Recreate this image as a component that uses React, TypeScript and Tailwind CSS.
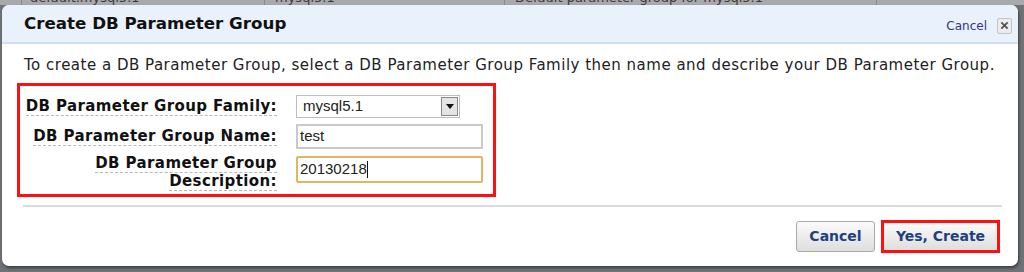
import React from "react";

export default function App() {
  const verdana = { fontFamily: '"DejaVu Sans", Verdana, sans-serif' } as React.CSSProperties;
  const arial = { fontFamily: '"Liberation Sans", Arial, sans-serif' } as React.CSSProperties;
  return (
    <div className="w-[1024px] h-[272px] overflow-hidden bg-[#6f7276] flex flex-col" style={verdana}>
      {/* background table row peeking above the dialog */}
      <div className="h-[5px] shrink-0 overflow-hidden bg-[#a7a9ac] flex text-[13px] text-[#3a3a3a] leading-[13px]">
        <div className="w-[22px] border-r border-[#8a8a8a]" />
        <div className="w-[243px] pl-[8px] -mt-[9px] border-r border-[#8a8a8a]">default.mysql5.1</div>
        <div className="w-[240px] pl-[10px] -mt-[9px] border-r border-[#8a8a8a]">mysql5.1</div>
        <div className="w-[372px] pl-[10px] -mt-[9px] border-r border-[#8a8a8a]">Default parameter group for mysql5.1</div>
        <div className="flex-1" />
      </div>
      <div className="flex-1 flex px-[2px] pr-[6px] pb-[6px]">
        <div className="flex-1 bg-white rounded-[7px] overflow-hidden flex flex-col shadow-[1px_2px_3px_rgba(0,0,0,0.45)]">
          {/* header */}
          <div className="h-[39px] shrink-0 bg-[#e9f2fc] border-b-2 border-[#cfe0f3] flex items-center justify-between pl-[22px] pr-[6px]">
            <div className="text-[16.7px] font-bold text-[#111] mt-[1px]">Create DB Parameter Group</div>
            <div className="flex items-center gap-[10px] mt-[4px]">
              <span className="text-[12px] text-[#33338f]">Cancel</span>
              <span className="w-[15px] h-[16px] border border-[#c4c4c4] bg-[#ececec] flex items-center justify-center rounded-[2px]">
                <svg width="9" height="9" viewBox="0 0 10 10">
                  <path d="M1.5 1.5 L8.5 8.5 M8.5 1.5 L1.5 8.5" stroke="#555" strokeWidth="2" />
                </svg>
              </span>
            </div>
          </div>
          {/* body */}
          <div className="pl-[22px] pr-[16px] pt-[12px] flex flex-col">
            <p className="text-[15px] tracking-[0.5px] text-[#222] leading-[18px]">
              To create a DB Parameter Group, select a DB Parameter Group Family then name and describe your DB Parameter Group.
            </p>
            <div className="mt-[9px] -ml-[7px] w-[479px] border-[3px] border-[#ff1010] pt-[9px] pb-[4px] flex flex-col">
              <div className="flex items-center">
                <div className="w-[257px] text-right text-[15px] tracking-[0.4px] font-bold text-[#111]">
                  <span className="border-b border-dashed border-[#b8b8b8]">DB Parameter Group Family:</span>
                </div>
                <div className="ml-[19px] w-[164px] h-[23px] border border-[#bdbdbd] flex items-center justify-between pl-[6px] pr-[1px]" style={arial}>
                  <span className="text-[15px] text-[#222]">mysql5.1</span>
                  <span className="w-[17px] h-[19px] border border-[#888] bg-[#e4e4e4] flex items-center justify-center">
                    <svg width="8" height="5" viewBox="0 0 8 5"><path d="M0 0 L8 0 L4 5 Z" fill="#111" /></svg>
                  </span>
                </div>
              </div>
              <div className="flex items-center mt-[6px]">
                <div className="w-[257px] text-right text-[15px] tracking-[0.4px] font-bold text-[#111]">
                  <span className="border-b border-dashed border-[#b8b8b8]">DB Parameter Group Name:</span>
                </div>
                <div className="ml-[19px] w-[187px] h-[25px] border-2 border-[#c9c9c9] flex items-center pl-[2px]" style={arial}>
                  <span className="text-[15px] text-[#222]">test</span>
                </div>
              </div>
              <div className="flex items-start mt-[7px]">
                <div className="w-[257px] -mt-[2px] text-right text-[15px] tracking-[0.4px] font-bold text-[#111] leading-[18px]">
                  <span className="border-b border-dashed border-[#b8b8b8]">DB Parameter Group</span>
                  <br />
                  <span className="border-b border-dashed border-[#b8b8b8]">Description:</span>
                </div>
                <div className="ml-[19px] w-[187px] h-[27px] border-2 border-[#e2b562] rounded-[2px] flex items-center pl-[2px]" style={arial}>
                  <span className="text-[15px] text-[#222]">20130218</span>
                  <span className="w-[1px] h-[17px] bg-[#111]" />
                </div>
              </div>
            </div>
            <div className="mt-[8px] h-[2px] bg-[#dadada] w-[979px] -ml-[1px]" />
            <div className="flex justify-end items-center gap-[6px] mt-[13px] pr-[2px]">
              <button className="w-[79px] h-[31px] border border-[#a9a9a9] rounded-[3px] bg-gradient-to-b from-[#fbfbfb] to-[#dedede] text-[14px] font-bold text-[#1f3f80]" style={verdana}>
                Cancel
              </button>
              <div className="border-[3px] border-[#ff1010] p-0">
                <button className="w-[113px] h-[27px] bg-gradient-to-b from-[#fbfbfb] to-[#dedede] text-[14px] font-bold text-[#1f3f80] flex items-center justify-center" style={verdana}>
                  Yes, Create
                </button>
              </div>
            </div>
          </div>
        </div>
      </div>
    </div>
  );
}
